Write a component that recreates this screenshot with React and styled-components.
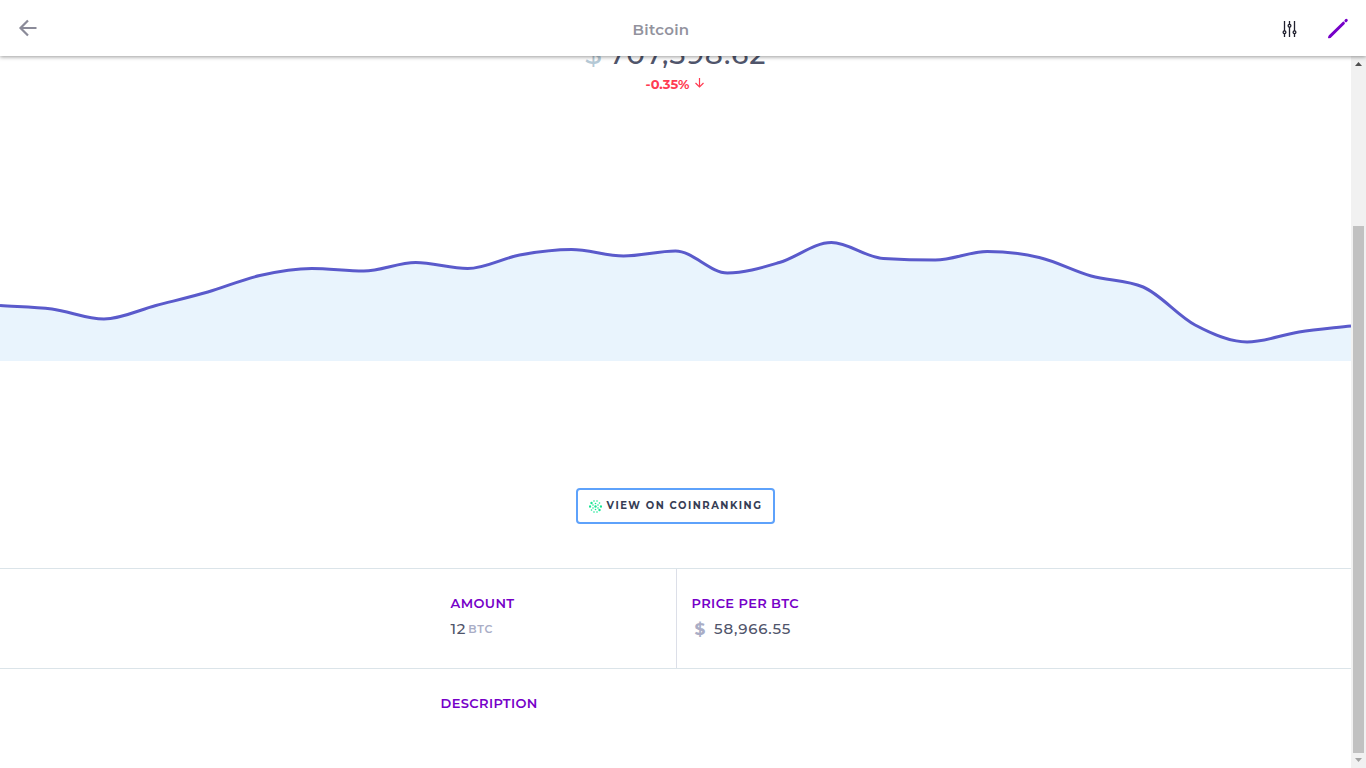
import React from "react";
import styled, { createGlobalStyle } from "styled-components";

const GlobalStyle = createGlobalStyle`
  *, *::before, *::after { box-sizing: border-box; }
  body {
    margin: 0;
    background: #fff;
    font-family: Montserrat, Inter, "Liberation Sans", sans-serif;
    color: #50556b;
  }
  h1, h2, p, dl, dt, dd { margin: 0; }
`;

const Page = styled.div`
  display: flex;
  flex-direction: column;
  height: 100vh;
  overflow: hidden;
`;

const Header = styled.header`
  position: relative;
  z-index: 1;
  flex: none;
  display: flex;
  justify-content: space-between;
  align-items: center;
  height: 56px;
  padding: 0 16px;
  background: #fff;
  box-shadow: 0 1px 4px rgba(0, 0, 0, 0.4);
`;

const Title = styled.h1`
  padding: 4px 0 0 4px;
  font-size: 15px;
  line-height: 20px;
  font-weight: 600;
  letter-spacing: 0.02em;
  color: #92929d;
`;

const Actions = styled.div`
  display: flex;
  justify-content: flex-end;
  gap: 24px;
`;

const IconButton = styled.button`
  display: flex;
  width: 24px;
  height: 24px;
  padding: 0;
  border: 0;
  background: none;
  color: ${(p) => p.$color};
  cursor: pointer;
`;

const Body = styled.div`
  flex: 1;
  min-height: 0;
  display: flex;
`;

const Content = styled.main`
  flex: 1;
  min-width: 0;
  display: flex;
  flex-direction: column;
  justify-content: flex-end;
  overflow: hidden;
  & > * { flex: none; }
`;

const Balance = styled.section`
  display: flex;
  flex-direction: column;
  align-items: center;
`;

const Total = styled.p`
  display: flex;
  gap: 6px;
  font-size: 28px;
  line-height: 36px;
  font-weight: 500;
  letter-spacing: 1px;
`;

const TotalCurrency = styled.span`
  color: #b5c9d6;
`;

const Change = styled.p`
  display: flex;
  align-items: center;
  gap: 4px;
  padding-top: 2px;
  font-size: 13px;
  line-height: 20px;
  font-weight: 700;
  color: #ff3b52;
`;

const ChartFrame = styled.section`
  padding: 136px 0 127px;
`;

const ChartSvg = styled.svg`
  display: block;
  width: 100%;
  height: 131px;
`;

const LinkRow = styled.div`
  display: flex;
  justify-content: center;
  padding-bottom: 44px;
`;

const RankingLink = styled.a`
  display: flex;
  align-items: center;
  gap: 5px;
  height: 36px;
  padding: 0 11px;
  border: 2px solid #5ea2fb;
  border-radius: 4px;
  font-size: 10px;
  line-height: 16px;
  font-weight: 700;
  letter-spacing: 0.15em;
  text-transform: uppercase;
  text-decoration: none;
  color: #363d54;
`;

const Stats = styled.dl`
  display: grid;
  grid-template-columns: 1fr 1fr;
  height: 101px;
  border: solid #dbe4e9;
  border-width: 1px 0;
`;

const StatCell = styled.div`
  padding: 24px 15px;
  & + & { border-left: 1px solid #dcdfe8; }
`;

const StatInner = styled.div`
  width: 210px;
  margin-left: ${(p) => (p.$end ? "auto" : "0")};
`;

const Label = styled.dt`
  font-size: 13px;
  line-height: 20px;
  font-weight: 600;
  letter-spacing: 0.03em;
  text-transform: uppercase;
  color: #7600c8;
`;

const Value = styled.dd`
  display: flex;
  align-items: center;
  gap: ${(p) => p.$gap};
  padding: 6px 0 0 ${(p) => p.$indent || "0"};
  font-size: 15px;
  line-height: 20px;
  font-weight: 500;
  letter-spacing: 0.05em;
`;

const Unit = styled.span`
  font-size: ${(p) => p.$size};
  font-weight: ${(p) => p.$weight};
  color: #a9adc6;
`;

const Description = styled.section`
  width: 100%;
  max-width: 470px;
  height: 99px;
  margin: 0 auto;
  padding-top: 24px;
`;

const Scrollbar = styled.div`
  flex: none;
  display: flex;
  flex-direction: column;
  width: 15px;
  padding: 0 2px;
  background: #f1f1f1;
`;

const ScrollArrow = styled.svg`
  flex: none;
  width: 11px;
  height: 15px;
`;

const ScrollSpace = styled.div`
  flex: 155;
`;

const ScrollThumb = styled.div`
  flex: 527;
  background: #c1c1c1;
`;

const PRICES = [
  305.5, 309, 319, 305.5, 292, 275.5, 268.5, 271, 262.5, 268.5, 255, 249.5,
  256, 251, 273, 262.5, 242.5, 258.5, 260, 251.5, 257.5, 276, 287, 325, 342,
  332, 326,
].map((y) => y - 230);

const STEP = 52;
const CHART_WIDTH = STEP * (PRICES.length - 1);
const CHART_HEIGHT = 131;

// Monotone cubic interpolation, so the line never overshoots a data point.
function monotonePath(values) {
  const slopes = values.slice(1).map((v, i) => (v - values[i]) / STEP);
  const tangents = values.map((_, i) => {
    if (i === 0) return slopes[0];
    if (i === values.length - 1) return slopes[i - 1];
    const a = slopes[i - 1];
    const b = slopes[i];
    return (
      (Math.sign(a) + Math.sign(b)) *
      Math.min(Math.abs(a), Math.abs(b), Math.abs(a + b) / 4)
    );
  });
  return values.reduce((path, v, i) => {
    if (i === 0) return `M0 ${v}`;
    const third = STEP / 3;
    const x = i * STEP;
    const y1 = values[i - 1] + tangents[i - 1] * third;
    const y2 = v - tangents[i] * third;
    return `${path}C${x - 2 * third} ${y1} ${x - third} ${y2} ${x} ${v}`;
  }, "");
}

function PriceChart() {
  const line = monotonePath(PRICES);
  return (
    <ChartSvg
      viewBox={`0 0 ${CHART_WIDTH} ${CHART_HEIGHT}`}
      preserveAspectRatio="none"
      role="img"
      aria-label="Bitcoin price history"
    >
      <path d={`${line}V${CHART_HEIGHT}H0Z`} fill="#e9f4fd" />
      <path
        d={line}
        fill="none"
        stroke="#5a5acb"
        strokeWidth="3"
        vectorEffect="non-scaling-stroke"
      />
    </ChartSvg>
  );
}

const BackIcon = () => (
  <svg width="24" height="24" viewBox="0 0 24 24" fill="none" stroke="currentColor" strokeWidth="2.2">
    <path d="M20.5 12H4.5M12 4.5L4.5 12L12 19.5" />
  </svg>
);

const SlidersIcon = () => (
  <svg width="24" height="24" viewBox="0 0 24 24" fill="none" stroke="currentColor" strokeWidth="1.3">
    <path d="M6.5 5V15M6.5 17.8V21M11.5 5V8M11.5 11V21M16.5 5V15M16.5 17.8V21" />
    <circle cx="6.5" cy="16.2" r="1.4" />
    <circle cx="11.5" cy="9.7" r="1.4" />
    <circle cx="16.5" cy="16.2" r="1.4" />
  </svg>
);

const PencilIcon = () => (
  <svg width="24" height="24" viewBox="0 0 24 24" fill="none" stroke="currentColor" strokeLinecap="round">
    <path d="M4 20.4L17.4 7.2" strokeWidth="3" />
    <path d="M3 21.4L4 20.4" strokeWidth="2" />
    <path d="M19.9 4.7L20.3 4.3" strokeWidth="3" />
  </svg>
);

const DownIcon = () => (
  <svg width="12" height="12" viewBox="0 0 12 12" fill="none" stroke="currentColor" strokeWidth="1.2">
    <path d="M6.5 0V9M2.5 5L6.5 9L10.5 5" />
  </svg>
);

const DOTS = [
  [5, 1], [8, 1], [2.5, 3], [6.5, 3.5], [10.5, 3], [1, 6.5], [4, 5],
  [4, 8], [6.5, 6.5], [9, 5], [9, 8], [12, 6.5], [2.5, 10], [6.5, 9.5],
  [10.5, 10], [5, 12], [8, 12],
];

const CoinrankingIcon = () => (
  <svg width="13" height="13" viewBox="0 0 13 13" fill="#19e694" aria-hidden="true">
    {DOTS.map(([x, y], i) => (
      <circle key={i} cx={x} cy={y} r={i % 3 === 2 ? 1.2 : 0.8} />
    ))}
  </svg>
);

export default function App() {
  return (
    <Page>
      <GlobalStyle />
      <Header>
        <IconButton type="button" aria-label="Back" $color="#8b8b99">
          <BackIcon />
        </IconButton>
        <Title>Bitcoin</Title>
        <Actions>
          <IconButton type="button" aria-label="Filters" $color="#20202e">
            <SlidersIcon />
          </IconButton>
          <IconButton type="button" aria-label="Edit" $color="#7600c8">
            <PencilIcon />
          </IconButton>
        </Actions>
      </Header>
      <Body>
        <Content>
          <Balance>
            <Total>
              <TotalCurrency>$</TotalCurrency>
              <span>707,598.62</span>
            </Total>
            <Change>
              -0.35%
              <DownIcon />
            </Change>
          </Balance>
          <ChartFrame>
            <PriceChart />
          </ChartFrame>
          <LinkRow>
            <RankingLink href="#coinranking">
              <CoinrankingIcon />
              View on Coinranking
            </RankingLink>
          </LinkRow>
          <Stats>
            <StatCell>
              <StatInner $end>
                <Label>Amount</Label>
                <Value $gap="2px">
                  12 <Unit $size="11px" $weight="600">BTC</Unit>
                </Value>
              </StatInner>
            </StatCell>
            <StatCell>
              <StatInner>
                <Label>Price per BTC</Label>
                <Value $gap="8px" $indent="3px">
                  <Unit $size="17px" $weight="700">$</Unit> 58,966.55
                </Value>
              </StatInner>
            </StatCell>
          </Stats>
          <Description>
            <Label as="h2">Description</Label>
          </Description>
        </Content>
        <Scrollbar aria-hidden="true">
          <ScrollArrow viewBox="0 0 11 15">
            <path d="M2 10L5.5 6L9 10Z" fill="#505050" />
          </ScrollArrow>
          <ScrollSpace />
          <ScrollThumb />
          <ScrollArrow viewBox="0 0 11 15">
            <path d="M2 5L5.5 9L9 5Z" fill="#a3a3a3" />
          </ScrollArrow>
        </Scrollbar>
      </Body>
    </Page>
  );
}
